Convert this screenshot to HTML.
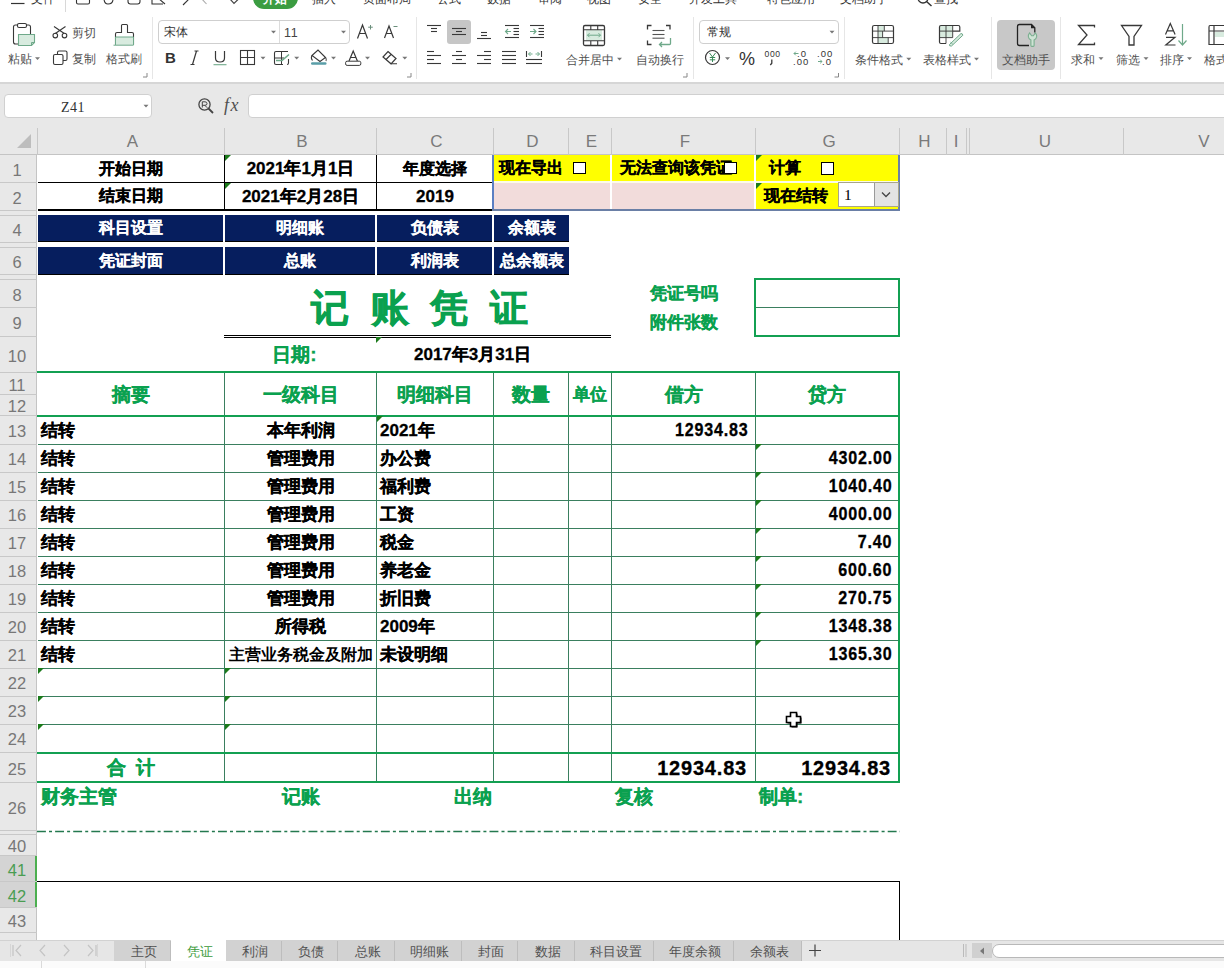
<!DOCTYPE html><html><head><meta charset='utf-8'><style>
*{margin:0;padding:0;box-sizing:border-box}
html,body{width:1224px;height:968px;overflow:hidden;background:#fff}
body{position:relative;font-family:"Liberation Sans",sans-serif;color:#000}
div{position:absolute}
.t{white-space:nowrap;line-height:1}
.rh{color:#7a7a7a;font-size:16.5px;text-align:center;width:34px;left:0}
.ch{color:#7a7a7a;font-size:17px;text-align:center;top:133px}
.n{display:inline-block;letter-spacing:0.9px;transform:scaleX(0.88);transform-origin:100% 50%}
.c{font-weight:bold;font-size:16px;white-space:nowrap;line-height:1;-webkit-text-stroke:0.3px currentColor}
</style></head><body><div style="left:0px;top:127px;width:1224px;height:28px;background:#e8e8e8;border-bottom:1px solid #c4c4c4"></div>
<div style="left:0px;top:155px;width:37px;height:785px;background:#e8e8e8;border-right:1px solid #c4c4c4"></div>
<svg style="position:absolute;left:15px;top:133px" width="18" height="16"><path d="M16 1 L16 15 L2 15 Z" fill="#bdbdbd"/></svg>
<div class="t ch" style="left:39px;width:187px">A</div>
<div class="t ch" style="left:226px;width:152px">B</div>
<div class="t ch" style="left:378px;width:117px">C</div>
<div class="t ch" style="left:495px;width:75px">D</div>
<div class="t ch" style="left:570px;width:43px">E</div>
<div class="t ch" style="left:613px;width:144px">F</div>
<div class="t ch" style="left:757px;width:144px">G</div>
<div class="t ch" style="left:901px;width:47px">H</div>
<div class="t ch" style="left:946px;width:20px">I</div>
<div class="t ch" style="left:968px;width:154px">U</div>
<div class="t ch" style="left:1125px;width:158px">V</div>
<div style="left:37px;top:128px;width:1px;height:27px;background:#c8c8c8"></div>
<div style="left:224px;top:128px;width:1px;height:27px;background:#c8c8c8"></div>
<div style="left:376px;top:128px;width:1px;height:27px;background:#c8c8c8"></div>
<div style="left:493px;top:128px;width:1px;height:27px;background:#c8c8c8"></div>
<div style="left:568px;top:128px;width:1px;height:27px;background:#c8c8c8"></div>
<div style="left:611px;top:128px;width:1px;height:27px;background:#c8c8c8"></div>
<div style="left:755px;top:128px;width:1px;height:27px;background:#c8c8c8"></div>
<div style="left:899px;top:128px;width:1px;height:27px;background:#c8c8c8"></div>
<div style="left:946px;top:128px;width:1px;height:27px;background:#c8c8c8"></div>
<div style="left:966px;top:128px;width:1px;height:27px;background:#c8c8c8"></div>
<div style="left:969px;top:128px;width:1px;height:27px;background:#c8c8c8"></div>
<div style="left:1123px;top:128px;width:1px;height:27px;background:#c8c8c8"></div>
<div style="left:0px;top:856px;width:37px;height:52px;background:#d4d4d4"></div>
<div style="left:35px;top:856px;width:2px;height:52px;background:#4caf50"></div>
<div style="left:0px;top:182px;width:37px;height:1px;background:#c8c8c8"></div>
<div class="t rh" style="top:162px;color:#777">1</div>
<div style="left:0px;top:210px;width:37px;height:1px;background:#c8c8c8"></div>
<div class="t rh" style="top:190px;color:#777">2</div>
<div style="left:0px;top:215px;width:37px;height:1px;background:#c8c8c8"></div>
<div style="left:0px;top:242px;width:37px;height:1px;background:#c8c8c8"></div>
<div class="t rh" style="top:222px;color:#777">4</div>
<div style="left:0px;top:247px;width:37px;height:1px;background:#c8c8c8"></div>
<div style="left:0px;top:274px;width:37px;height:1px;background:#c8c8c8"></div>
<div class="t rh" style="top:254px;color:#777">6</div>
<div style="left:0px;top:279px;width:37px;height:1px;background:#c8c8c8"></div>
<div style="left:0px;top:307px;width:37px;height:1px;background:#c8c8c8"></div>
<div class="t rh" style="top:287px;color:#777">8</div>
<div style="left:0px;top:336px;width:37px;height:1px;background:#c8c8c8"></div>
<div class="t rh" style="top:315px;color:#777">9</div>
<div style="left:0px;top:372px;width:37px;height:1px;background:#c8c8c8"></div>
<div class="t rh" style="top:348px;color:#777">10</div>
<div style="left:0px;top:394px;width:37px;height:1px;background:#c8c8c8"></div>
<div class="t rh" style="top:377px;color:#777">11</div>
<div style="left:0px;top:415px;width:37px;height:1px;background:#c8c8c8"></div>
<div class="t rh" style="top:398px;color:#777">12</div>
<div style="left:0px;top:444px;width:37px;height:1px;background:#c8c8c8"></div>
<div class="t rh" style="top:423px;color:#777">13</div>
<div style="left:0px;top:472px;width:37px;height:1px;background:#c8c8c8"></div>
<div class="t rh" style="top:451px;color:#777">14</div>
<div style="left:0px;top:500px;width:37px;height:1px;background:#c8c8c8"></div>
<div class="t rh" style="top:479px;color:#777">15</div>
<div style="left:0px;top:528px;width:37px;height:1px;background:#c8c8c8"></div>
<div class="t rh" style="top:507px;color:#777">16</div>
<div style="left:0px;top:556px;width:37px;height:1px;background:#c8c8c8"></div>
<div class="t rh" style="top:535px;color:#777">17</div>
<div style="left:0px;top:584px;width:37px;height:1px;background:#c8c8c8"></div>
<div class="t rh" style="top:563px;color:#777">18</div>
<div style="left:0px;top:612px;width:37px;height:1px;background:#c8c8c8"></div>
<div class="t rh" style="top:591px;color:#777">19</div>
<div style="left:0px;top:640px;width:37px;height:1px;background:#c8c8c8"></div>
<div class="t rh" style="top:619px;color:#777">20</div>
<div style="left:0px;top:668px;width:37px;height:1px;background:#c8c8c8"></div>
<div class="t rh" style="top:647px;color:#777">21</div>
<div style="left:0px;top:696px;width:37px;height:1px;background:#c8c8c8"></div>
<div class="t rh" style="top:675px;color:#777">22</div>
<div style="left:0px;top:724px;width:37px;height:1px;background:#c8c8c8"></div>
<div class="t rh" style="top:703px;color:#777">23</div>
<div style="left:0px;top:752px;width:37px;height:1px;background:#c8c8c8"></div>
<div class="t rh" style="top:731px;color:#777">24</div>
<div style="left:0px;top:782px;width:37px;height:1px;background:#c8c8c8"></div>
<div class="t rh" style="top:761px;color:#777">25</div>
<div style="left:0px;top:830px;width:37px;height:1px;background:#c8c8c8"></div>
<div class="t rh" style="top:800px;color:#777">26</div>
<div style="left:0px;top:855px;width:37px;height:1px;background:#c8c8c8"></div>
<div class="t rh" style="top:838px;color:#777">40</div>
<div style="left:0px;top:881px;width:37px;height:1px;background:#c8c8c8"></div>
<div class="t rh" style="top:862px;color:#4a9d52">41</div>
<div style="left:0px;top:907px;width:37px;height:1px;background:#c8c8c8"></div>
<div class="t rh" style="top:888px;color:#4a9d52">42</div>
<div style="left:0px;top:932px;width:37px;height:1px;background:#c8c8c8"></div>
<div class="t rh" style="top:913px;color:#777">43</div>
<div style="left:0px;top:834px;width:37px;height:1px;background:#c8c8c8"></div>
<div class="c" style="left:38px;top:155px;width:186px;height:27px;display:flex;align-items:center;justify-content:center;padding:0 4px;">开始日期</div>
<div class="c" style="left:225px;top:155px;width:151px;height:27px;display:flex;align-items:center;justify-content:center;padding:0 4px;font-size:17px">2021年1月1日</div>
<div class="c" style="left:377px;top:155px;width:116px;height:27px;display:flex;align-items:center;justify-content:center;padding:0 4px;">年度选择</div>
<div class="c" style="left:38px;top:183px;width:186px;height:26px;display:flex;align-items:center;justify-content:center;padding:0 4px;">结束日期</div>
<div class="c" style="left:225px;top:183px;width:151px;height:26px;display:flex;align-items:center;justify-content:center;padding:0 4px;font-size:17px">2021年2月28日</div>
<div class="c" style="left:377px;top:183px;width:116px;height:26px;display:flex;align-items:center;justify-content:center;padding:0 4px;font-size:17px">2019</div>
<div style="left:38px;top:182px;width:455px;height:1px;background:#000"></div>
<div style="left:38px;top:209px;width:455px;height:2px;background:#000"></div>
<div style="left:224px;top:155px;width:1px;height:54px;background:#000"></div>
<div style="left:376px;top:155px;width:1px;height:54px;background:#000"></div>
<svg style="position:absolute;left:225px;top:155px" width="6" height="6"><path d="M0 0 L6 0 L0 6 Z" fill="#1b7a1b"/></svg>
<svg style="position:absolute;left:225px;top:183px" width="6" height="6"><path d="M0 0 L6 0 L0 6 Z" fill="#1b7a1b"/></svg>
<div style="left:492px;top:155px;width:408px;height:56px;background:#fbfbe8"></div>
<div style="left:494px;top:155px;width:116px;height:26px;background:#ffff00"></div>
<div style="left:494px;top:183px;width:116px;height:26px;background:#f2dcdb"></div>
<div style="left:612px;top:155px;width:142px;height:26px;background:#ffff00"></div>
<div style="left:612px;top:183px;width:142px;height:26px;background:#f2dcdb"></div>
<div style="left:756px;top:155px;width:142px;height:26px;background:#ffff00"></div>
<div style="left:756px;top:183px;width:142px;height:26px;background:#ffff00"></div>
<div style="left:610px;top:155px;width:2px;height:56px;background:#fff"></div>
<div style="left:754px;top:155px;width:2px;height:56px;background:#fff"></div>
<div style="left:492px;top:155px;width:2px;height:56px;background:#5b7fc3"></div>
<div style="left:492px;top:209px;width:408px;height:2px;background:#6a7fa6"></div>
<div style="left:898px;top:155px;width:2px;height:56px;background:#6a80a8"></div>
<div class="c" style="left:494px;top:155px;width:116px;height:26px;display:flex;align-items:center;justify-content:flex-start;padding:0 5px;">现在导出</div>
<div style="left:573px;top:162px;width:13px;height:12px;background:#fff;border:1px solid #000"></div>
<div class="c" style="left:612px;top:155px;width:142px;height:26px;display:flex;align-items:center;justify-content:flex-start;padding:0 8px;overflow:hidden">无法查询该凭证</div>
<div style="left:724px;top:162px;width:13px;height:12px;background:#fff;border:1px solid #000"></div>
<div class="c" style="left:756px;top:155px;width:142px;height:26px;display:flex;align-items:center;justify-content:flex-start;padding:0 13px;">计算</div>
<div style="left:821px;top:162px;width:13px;height:13px;background:#fff;border:1px solid #000"></div>
<div class="c" style="left:756px;top:183px;width:142px;height:26px;display:flex;align-items:center;justify-content:flex-start;padding:0 8px;">现在结转</div>
<div style="left:838px;top:182px;width:61px;height:25px;background:#fff;border:1px solid #a9a58a"></div>
<div style="left:874px;top:183px;width:24px;height:23px;background:#e3e3e3;border-left:1px solid #9a9a9a"></div>
<div class="t" style="left:844px;top:187px;font-size:15.5px;font-family:'Liberation Serif',serif">1</div>
<svg style="position:absolute;left:880px;top:191px" width="12" height="8"><path d="M2 1.5 L6 5.5 L10 1.5" stroke="#444" stroke-width="1.3" fill="none"/></svg>
<svg style="position:absolute;left:756px;top:155px" width="6" height="6"><path d="M0 0 L6 0 L0 6 Z" fill="#1b7a1b"/></svg>
<svg style="position:absolute;left:756px;top:183px" width="6" height="6"><path d="M0 0 L6 0 L0 6 Z" fill="#1b7a1b"/></svg>
<div style="left:38px;top:215px;width:185px;height:27px;background:#061e5e;border-bottom:1px solid #000"></div>
<div class="c" style="left:38px;top:215px;width:185px;height:26px;display:flex;align-items:center;justify-content:center;padding:0 4px;color:#fff;-webkit-text-stroke:0.15px #fff">科目设置</div>
<div style="left:225px;top:215px;width:150px;height:27px;background:#061e5e;border-bottom:1px solid #000"></div>
<div class="c" style="left:225px;top:215px;width:150px;height:26px;display:flex;align-items:center;justify-content:center;padding:0 4px;color:#fff;-webkit-text-stroke:0.15px #fff">明细账</div>
<div style="left:377px;top:215px;width:115px;height:27px;background:#061e5e;border-bottom:1px solid #000"></div>
<div class="c" style="left:377px;top:215px;width:115px;height:26px;display:flex;align-items:center;justify-content:center;padding:0 4px;color:#fff;-webkit-text-stroke:0.15px #fff">负债表</div>
<div style="left:494px;top:215px;width:75px;height:27px;background:#061e5e;border-bottom:1px solid #000"></div>
<div class="c" style="left:494px;top:215px;width:75px;height:26px;display:flex;align-items:center;justify-content:center;padding:0 4px;color:#fff;-webkit-text-stroke:0.15px #fff">余额表</div>
<div style="left:38px;top:247px;width:185px;height:28px;background:#061e5e;border-bottom:1px solid #000"></div>
<div class="c" style="left:38px;top:247px;width:185px;height:27px;display:flex;align-items:center;justify-content:center;padding:0 4px;color:#fff;-webkit-text-stroke:0.15px #fff">凭证封面</div>
<div style="left:225px;top:247px;width:150px;height:28px;background:#061e5e;border-bottom:1px solid #000"></div>
<div class="c" style="left:225px;top:247px;width:150px;height:27px;display:flex;align-items:center;justify-content:center;padding:0 4px;color:#fff;-webkit-text-stroke:0.15px #fff">总账</div>
<div style="left:377px;top:247px;width:115px;height:28px;background:#061e5e;border-bottom:1px solid #000"></div>
<div class="c" style="left:377px;top:247px;width:115px;height:27px;display:flex;align-items:center;justify-content:center;padding:0 4px;color:#fff;-webkit-text-stroke:0.15px #fff">利润表</div>
<div style="left:494px;top:247px;width:75px;height:28px;background:#061e5e;border-bottom:1px solid #000"></div>
<div class="c" style="left:494px;top:247px;width:75px;height:27px;display:flex;align-items:center;justify-content:center;padding:0 4px;color:#fff;-webkit-text-stroke:0.15px #fff">总余额表</div>
<div class="c" style="left:226px;top:280px;width:387px;height:56px;display:flex;align-items:center;justify-content:center;padding:0 4px;color:#0aa14f;font-size:38px;word-spacing:11px;-webkit-text-stroke:0.7px #0aa14f">记 账 凭 证</div>
<div style="left:224px;top:335px;width:387px;height:1px;background:#000"></div>
<div style="left:224px;top:337px;width:387px;height:1px;background:#000"></div>
<svg style="position:absolute;left:376px;top:337px" width="6" height="6"><path d="M0 0 L6 0 L0 6 Z" fill="#1b7a1b"/></svg>
<div class="c" style="left:225px;top:338px;width:139px;height:33px;display:flex;align-items:center;justify-content:center;padding:0 4px;color:#0aa14f;font-size:19px">日期:</div>
<div class="c" style="left:377px;top:338px;width:234px;height:33px;display:flex;align-items:center;justify-content:flex-start;padding:0 37px;font-size:17px">2017年3月31日</div>
<div class="c" style="left:612px;top:280px;width:143px;height:27px;display:flex;align-items:center;justify-content:center;padding:0 4px;color:#0aa14f;font-size:17px">凭证号吗</div>
<div class="c" style="left:612px;top:308px;width:143px;height:28px;display:flex;align-items:center;justify-content:center;padding:0 4px;color:#0aa14f;font-size:17px">附件张数</div>
<div style="left:754px;top:278px;width:146px;height:59px;border:2px solid #13a052"></div>
<div style="left:756px;top:307px;width:142px;height:1px;background:#3a7f5f"></div>
<div style="left:224px;top:373px;width:1px;height:408px;background:#3a7f5f"></div>
<div style="left:376px;top:373px;width:1px;height:408px;background:#3a7f5f"></div>
<div style="left:493px;top:373px;width:1px;height:408px;background:#3a7f5f"></div>
<div style="left:568px;top:373px;width:1px;height:408px;background:#3a7f5f"></div>
<div style="left:611px;top:373px;width:1px;height:408px;background:#3a7f5f"></div>
<div style="left:755px;top:373px;width:1px;height:408px;background:#3a7f5f"></div>
<div style="left:38px;top:444px;width:860px;height:1px;background:#3a7f5f"></div>
<div style="left:38px;top:472px;width:860px;height:1px;background:#3a7f5f"></div>
<div style="left:38px;top:500px;width:860px;height:1px;background:#3a7f5f"></div>
<div style="left:38px;top:528px;width:860px;height:1px;background:#3a7f5f"></div>
<div style="left:38px;top:556px;width:860px;height:1px;background:#3a7f5f"></div>
<div style="left:38px;top:584px;width:860px;height:1px;background:#3a7f5f"></div>
<div style="left:38px;top:612px;width:860px;height:1px;background:#3a7f5f"></div>
<div style="left:38px;top:640px;width:860px;height:1px;background:#3a7f5f"></div>
<div style="left:38px;top:668px;width:860px;height:1px;background:#3a7f5f"></div>
<div style="left:38px;top:696px;width:860px;height:1px;background:#3a7f5f"></div>
<div style="left:38px;top:724px;width:860px;height:1px;background:#3a7f5f"></div>
<div style="left:37px;top:371px;width:863px;height:2px;background:#13a052"></div>
<div style="left:37px;top:415px;width:863px;height:2px;background:#13a052"></div>
<div style="left:37px;top:752px;width:863px;height:2px;background:#13a052"></div>
<div style="left:37px;top:781px;width:863px;height:2px;background:#13a052"></div>
<div style="left:898px;top:371px;width:2px;height:412px;background:#13a052"></div>
<div class="c" style="left:38px;top:373px;width:186px;height:42px;display:flex;align-items:center;justify-content:center;padding:0 2px;color:#0aa14f;font-size:19px">摘要</div>
<div class="c" style="left:225px;top:373px;width:151px;height:42px;display:flex;align-items:center;justify-content:center;padding:0 2px;color:#0aa14f;font-size:19px">一级科目</div>
<div class="c" style="left:377px;top:373px;width:116px;height:42px;display:flex;align-items:center;justify-content:center;padding:0 2px;color:#0aa14f;font-size:19px">明细科目</div>
<div class="c" style="left:494px;top:373px;width:74px;height:42px;display:flex;align-items:center;justify-content:center;padding:0 2px;color:#0aa14f;font-size:19px">数量</div>
<div class="c" style="left:569px;top:373px;width:42px;height:42px;display:flex;align-items:center;justify-content:center;padding:0 2px;color:#0aa14f;font-size:17px">单位</div>
<div class="c" style="left:612px;top:373px;width:143px;height:42px;display:flex;align-items:center;justify-content:center;padding:0 2px;color:#0aa14f;font-size:19px">借方</div>
<div class="c" style="left:756px;top:373px;width:142px;height:42px;display:flex;align-items:center;justify-content:center;padding:0 2px;color:#0aa14f;font-size:19px">贷方</div>
<div class="c" style="left:38px;top:417px;width:186px;height:27px;display:flex;align-items:center;justify-content:flex-start;padding:0 3px;font-size:17px">结转</div>
<div class="c" style="left:225px;top:417px;width:151px;height:27px;display:flex;align-items:center;justify-content:center;padding:0 1px;font-size:17px">本年利润</div>
<div class="c" style="left:377px;top:417px;width:116px;height:27px;display:flex;align-items:center;justify-content:flex-start;padding:0 3px;font-size:17px">2021年</div>
<div class="c" style="left:612px;top:417px;width:143px;height:27px;display:flex;align-items:center;justify-content:flex-end;padding:0 7px;font-size:18.3px"><span class="n">12934.83</span></div>
<div class="c" style="left:38px;top:445px;width:186px;height:27px;display:flex;align-items:center;justify-content:flex-start;padding:0 3px;font-size:17px">结转</div>
<div class="c" style="left:225px;top:445px;width:151px;height:27px;display:flex;align-items:center;justify-content:center;padding:0 1px;font-size:17px">管理费用</div>
<div class="c" style="left:377px;top:445px;width:116px;height:27px;display:flex;align-items:center;justify-content:flex-start;padding:0 3px;font-size:17px">办公费</div>
<div class="c" style="left:756px;top:445px;width:142px;height:27px;display:flex;align-items:center;justify-content:flex-end;padding:0 6px;font-size:18.3px"><span class="n">4302.00</span></div>
<div class="c" style="left:38px;top:473px;width:186px;height:27px;display:flex;align-items:center;justify-content:flex-start;padding:0 3px;font-size:17px">结转</div>
<div class="c" style="left:225px;top:473px;width:151px;height:27px;display:flex;align-items:center;justify-content:center;padding:0 1px;font-size:17px">管理费用</div>
<div class="c" style="left:377px;top:473px;width:116px;height:27px;display:flex;align-items:center;justify-content:flex-start;padding:0 3px;font-size:17px">福利费</div>
<div class="c" style="left:756px;top:473px;width:142px;height:27px;display:flex;align-items:center;justify-content:flex-end;padding:0 6px;font-size:18.3px"><span class="n">1040.40</span></div>
<div class="c" style="left:38px;top:501px;width:186px;height:27px;display:flex;align-items:center;justify-content:flex-start;padding:0 3px;font-size:17px">结转</div>
<div class="c" style="left:225px;top:501px;width:151px;height:27px;display:flex;align-items:center;justify-content:center;padding:0 1px;font-size:17px">管理费用</div>
<div class="c" style="left:377px;top:501px;width:116px;height:27px;display:flex;align-items:center;justify-content:flex-start;padding:0 3px;font-size:17px">工资</div>
<div class="c" style="left:756px;top:501px;width:142px;height:27px;display:flex;align-items:center;justify-content:flex-end;padding:0 6px;font-size:18.3px"><span class="n">4000.00</span></div>
<div class="c" style="left:38px;top:529px;width:186px;height:27px;display:flex;align-items:center;justify-content:flex-start;padding:0 3px;font-size:17px">结转</div>
<div class="c" style="left:225px;top:529px;width:151px;height:27px;display:flex;align-items:center;justify-content:center;padding:0 1px;font-size:17px">管理费用</div>
<div class="c" style="left:377px;top:529px;width:116px;height:27px;display:flex;align-items:center;justify-content:flex-start;padding:0 3px;font-size:17px">税金</div>
<div class="c" style="left:756px;top:529px;width:142px;height:27px;display:flex;align-items:center;justify-content:flex-end;padding:0 6px;font-size:18.3px"><span class="n">7.40</span></div>
<div class="c" style="left:38px;top:557px;width:186px;height:27px;display:flex;align-items:center;justify-content:flex-start;padding:0 3px;font-size:17px">结转</div>
<div class="c" style="left:225px;top:557px;width:151px;height:27px;display:flex;align-items:center;justify-content:center;padding:0 1px;font-size:17px">管理费用</div>
<div class="c" style="left:377px;top:557px;width:116px;height:27px;display:flex;align-items:center;justify-content:flex-start;padding:0 3px;font-size:17px">养老金</div>
<div class="c" style="left:756px;top:557px;width:142px;height:27px;display:flex;align-items:center;justify-content:flex-end;padding:0 6px;font-size:18.3px"><span class="n">600.60</span></div>
<div class="c" style="left:38px;top:585px;width:186px;height:27px;display:flex;align-items:center;justify-content:flex-start;padding:0 3px;font-size:17px">结转</div>
<div class="c" style="left:225px;top:585px;width:151px;height:27px;display:flex;align-items:center;justify-content:center;padding:0 1px;font-size:17px">管理费用</div>
<div class="c" style="left:377px;top:585px;width:116px;height:27px;display:flex;align-items:center;justify-content:flex-start;padding:0 3px;font-size:17px">折旧费</div>
<div class="c" style="left:756px;top:585px;width:142px;height:27px;display:flex;align-items:center;justify-content:flex-end;padding:0 6px;font-size:18.3px"><span class="n">270.75</span></div>
<div class="c" style="left:38px;top:613px;width:186px;height:27px;display:flex;align-items:center;justify-content:flex-start;padding:0 3px;font-size:17px">结转</div>
<div class="c" style="left:225px;top:613px;width:151px;height:27px;display:flex;align-items:center;justify-content:center;padding:0 1px;font-size:17px">所得税</div>
<div class="c" style="left:377px;top:613px;width:116px;height:27px;display:flex;align-items:center;justify-content:flex-start;padding:0 3px;font-size:17px">2009年</div>
<div class="c" style="left:756px;top:613px;width:142px;height:27px;display:flex;align-items:center;justify-content:flex-end;padding:0 6px;font-size:18.3px"><span class="n">1348.38</span></div>
<div class="c" style="left:38px;top:641px;width:186px;height:27px;display:flex;align-items:center;justify-content:flex-start;padding:0 3px;font-size:17px">结转</div>
<div class="c" style="left:225px;top:641px;width:151px;height:27px;display:flex;align-items:center;justify-content:center;padding:0 1px;font-size:16px;-webkit-text-stroke:0">主营业务税金及附加</div>
<div class="c" style="left:377px;top:641px;width:116px;height:27px;display:flex;align-items:center;justify-content:flex-start;padding:0 3px;font-size:17px">未设明细</div>
<div class="c" style="left:756px;top:641px;width:142px;height:27px;display:flex;align-items:center;justify-content:flex-end;padding:0 6px;font-size:18.3px"><span class="n">1365.30</span></div>
<svg style="position:absolute;left:377px;top:416px" width="6" height="6"><path d="M0 0 L6 0 L0 6 Z" fill="#1b7a1b"/></svg>
<svg style="position:absolute;left:756px;top:444px" width="6" height="6"><path d="M0 0 L6 0 L0 6 Z" fill="#1b7a1b"/></svg>
<svg style="position:absolute;left:756px;top:472px" width="6" height="6"><path d="M0 0 L6 0 L0 6 Z" fill="#1b7a1b"/></svg>
<svg style="position:absolute;left:756px;top:500px" width="6" height="6"><path d="M0 0 L6 0 L0 6 Z" fill="#1b7a1b"/></svg>
<svg style="position:absolute;left:756px;top:528px" width="6" height="6"><path d="M0 0 L6 0 L0 6 Z" fill="#1b7a1b"/></svg>
<svg style="position:absolute;left:756px;top:556px" width="6" height="6"><path d="M0 0 L6 0 L0 6 Z" fill="#1b7a1b"/></svg>
<svg style="position:absolute;left:756px;top:584px" width="6" height="6"><path d="M0 0 L6 0 L0 6 Z" fill="#1b7a1b"/></svg>
<svg style="position:absolute;left:756px;top:612px" width="6" height="6"><path d="M0 0 L6 0 L0 6 Z" fill="#1b7a1b"/></svg>
<svg style="position:absolute;left:756px;top:640px" width="6" height="6"><path d="M0 0 L6 0 L0 6 Z" fill="#1b7a1b"/></svg>
<svg style="position:absolute;left:38px;top:668px" width="6" height="6"><path d="M0 0 L6 0 L0 6 Z" fill="#1b7a1b"/></svg>
<svg style="position:absolute;left:225px;top:668px" width="6" height="6"><path d="M0 0 L6 0 L0 6 Z" fill="#1b7a1b"/></svg>
<svg style="position:absolute;left:38px;top:696px" width="6" height="6"><path d="M0 0 L6 0 L0 6 Z" fill="#1b7a1b"/></svg>
<svg style="position:absolute;left:225px;top:696px" width="6" height="6"><path d="M0 0 L6 0 L0 6 Z" fill="#1b7a1b"/></svg>
<svg style="position:absolute;left:38px;top:724px" width="6" height="6"><path d="M0 0 L6 0 L0 6 Z" fill="#1b7a1b"/></svg>
<svg style="position:absolute;left:225px;top:724px" width="6" height="6"><path d="M0 0 L6 0 L0 6 Z" fill="#1b7a1b"/></svg>
<div class="c" style="left:38px;top:754px;width:186px;height:27px;display:flex;align-items:center;justify-content:center;padding:0 4px;color:#0aa14f;font-size:19px">合&nbsp;&nbsp;计</div>
<div class="c" style="left:612px;top:754px;width:143px;height:27px;display:flex;align-items:center;justify-content:flex-end;padding:0 8px;font-size:20px;letter-spacing:0.8px">12934.83</div>
<div class="c" style="left:756px;top:754px;width:142px;height:27px;display:flex;align-items:center;justify-content:flex-end;padding:0 7px;font-size:20px;letter-spacing:0.8px">12934.83</div>
<div class="t" style="left:41px;top:787px;color:#0aa14f;font-weight:bold;font-size:19px;-webkit-text-stroke:0.3px #0aa14f">财务主管</div>
<div class="t" style="left:282px;top:787px;color:#0aa14f;font-weight:bold;font-size:19px;-webkit-text-stroke:0.3px #0aa14f">记账</div>
<div class="t" style="left:454px;top:787px;color:#0aa14f;font-weight:bold;font-size:19px;-webkit-text-stroke:0.3px #0aa14f">出纳</div>
<div class="t" style="left:615px;top:787px;color:#0aa14f;font-weight:bold;font-size:19px;-webkit-text-stroke:0.3px #0aa14f">复核</div>
<div class="t" style="left:759px;top:787px;color:#0aa14f;font-weight:bold;font-size:19px;-webkit-text-stroke:0.3px #0aa14f">制单:</div>
<svg style="position:absolute;left:37px;top:830px" width="863" height="3"><line x1="0" y1="1.5" x2="863" y2="1.5" stroke="#24794f" stroke-width="1.3" stroke-dasharray="8.9 3.1 3 3.1"/></svg>
<div style="left:37px;top:881px;width:863px;height:70px;border-top:1px solid #000;border-right:1px solid #000"></div>
<svg style="position:absolute;left:784px;top:710px" width="20" height="20"><path d="M7.5 3.5 H13.5 V7.5 H17.5 V13.5 H13.5 V17.5 H7.5 V13.5 H3.5 V7.5 H7.5 Z" fill="#000"/><path d="M6.5 2.5 H12.5 V6.5 H16.5 V12.5 H12.5 V16.5 H6.5 V12.5 H2.5 V6.5 H6.5 Z" fill="#fff" stroke="#000" stroke-width="1.6"/></svg>
<div style="left:0px;top:82px;width:1224px;height:2px;background:#d6d6d6"></div>
<div style="left:0px;top:84px;width:1224px;height:44px;background:#e8e8e8"></div>
<div style="left:4px;top:94px;width:148px;height:24px;background:#fff;border:1px solid #d0d0d0;border-radius:4px"></div>
<div class="t" style="left:61px;top:101px;font-family:'Liberation Serif',serif;font-size:14px;color:#333;letter-spacing:0.5px">Z41</div>
<div style="left:248px;top:94px;width:990px;height:24px;background:#fff;border:1px solid #d0d0d0;border-radius:4px"></div>
<svg style="position:absolute;left:0;top:84px" width="260" height="44" viewBox="0 84 260 44"><path d="M143.5 104.8 L148.5 104.8 L146 107.5 Z" fill="#777"/><circle cx="204.5" cy="104.5" r="5.6" stroke="#444" stroke-width="1.3" fill="none"/><path d="M208.5 108.5 L213 113" stroke="#444" stroke-width="1.8"/><path d="M202.3 107.5 V101.8 H205 Q207 101.8 207 103.6 Q207 105.3 205 105.3 H202.3 M204.8 105.3 L207.3 107.8" stroke="#444" stroke-width="1" fill="none"/></svg>
<div class="t" style="left:224px;top:96px;font-family:'Liberation Serif',serif;font-style:italic;font-size:18px;color:#505050;letter-spacing:1.5px">fx</div>
<div class="t" style="left:31px;top:-7px;font-size:12px;color:#333">文件</div>
<div class="t" style="left:312px;top:-7px;font-size:12px;color:#333">插入</div>
<div class="t" style="left:363px;top:-7px;font-size:12px;color:#333">页面布局</div>
<div class="t" style="left:437px;top:-7px;font-size:12px;color:#333">公式</div>
<div class="t" style="left:487px;top:-7px;font-size:12px;color:#333">数据</div>
<div class="t" style="left:538px;top:-7px;font-size:12px;color:#333">审阅</div>
<div class="t" style="left:587px;top:-7px;font-size:12px;color:#333">视图</div>
<div class="t" style="left:638px;top:-7px;font-size:12px;color:#333">安全</div>
<div class="t" style="left:689px;top:-7px;font-size:12px;color:#333">开发工具</div>
<div class="t" style="left:767px;top:-7px;font-size:12px;color:#333">特色应用</div>
<div class="t" style="left:840px;top:-7px;font-size:12px;color:#333">文档助手</div>
<div class="t" style="left:934px;top:-7px;font-size:12px;color:#333">查找</div>
<div style="left:253px;top:-14px;width:45px;height:23px;background:#3b9c41;border-radius:11px"></div>
<div class="t" style="left:263px;top:-7px;font-size:12px;color:#fff;font-weight:bold">开始</div>
<div class="t" style="left:8px;top:53px;font-size:12px;color:#505050">粘贴</div>
<div class="t" style="left:72px;top:27px;font-size:12px;color:#505050">剪切</div>
<div class="t" style="left:72px;top:53px;font-size:12px;color:#505050">复制</div>
<div class="t" style="left:106px;top:53px;font-size:12px;color:#505050">格式刷</div>
<div class="t" style="left:566px;top:54px;font-size:12px;color:#505050">合并居中</div>
<div class="t" style="left:636px;top:54px;font-size:12px;color:#505050">自动换行</div>
<div class="t" style="left:855px;top:54px;font-size:12px;color:#505050">条件格式</div>
<div class="t" style="left:923px;top:54px;font-size:12px;color:#505050">表格样式</div>
<div class="t" style="left:1071px;top:54px;font-size:12px;color:#505050">求和</div>
<div class="t" style="left:1116px;top:54px;font-size:12px;color:#505050">筛选</div>
<div class="t" style="left:1160px;top:54px;font-size:12px;color:#505050">排序</div>
<div class="t" style="left:1204px;top:54px;font-size:12px;color:#505050">格式</div>
<div style="left:997px;top:20px;width:58px;height:50px;background:#c8c8c8;border-radius:4px"></div>
<div class="t" style="left:1002px;top:54px;font-size:12px;color:#505050">文档助手</div>
<div style="left:158px;top:20px;width:192px;height:24px;background:#fff;border:1px solid #cfcfcf;border-radius:4px"></div>
<div style="left:279px;top:21px;width:1px;height:22px;background:#dcdcdc"></div>
<div class="t" style="left:164px;top:26px;font-size:12px;color:#333">宋体</div>
<div class="t" style="left:284px;top:27px;font-size:12.5px;color:#444;letter-spacing:0.8px">11</div>
<div style="left:699px;top:20px;width:140px;height:24px;background:#fff;border:1px solid #cfcfcf;border-radius:4px"></div>
<div class="t" style="left:707px;top:26px;font-size:12px;color:#333">常规</div>
<div style="left:447px;top:20px;width:24px;height:24px;background:#c6c6c6;border-radius:3px"></div>
<div class="t" style="left:165px;top:50px;font-size:15px;font-weight:bold;color:#333">B</div>
<div class="t" style="left:739px;top:50px;font-size:18px;color:#333">%</div>
<svg style="position:absolute;left:0;top:0" width="1224" height="90" viewBox="0 0 1224 90"><line x1="152.5" y1="17" x2="152.5" y2="79" stroke="#e6e6e6" stroke-width="1"/><line x1="416.5" y1="17" x2="416.5" y2="79" stroke="#e6e6e6" stroke-width="1"/><line x1="693.5" y1="17" x2="693.5" y2="79" stroke="#e6e6e6" stroke-width="1"/><line x1="844.5" y1="17" x2="844.5" y2="79" stroke="#e6e6e6" stroke-width="1"/><line x1="991.5" y1="17" x2="991.5" y2="79" stroke="#e6e6e6" stroke-width="1"/><line x1="1060.5" y1="17" x2="1060.5" y2="79" stroke="#e6e6e6" stroke-width="1"/><line x1="65.5" y1="0" x2="65.5" y2="12" stroke="#d8d8d8" stroke-width="1"/><path d="M143 77 H147 V73" stroke="#888" stroke-width="1" fill="none" /><path d="M407 77 H411 V73" stroke="#888" stroke-width="1" fill="none" /><path d="M683 77 H687 V73" stroke="#888" stroke-width="1" fill="none" /><path d="M834.5 77 H838.5 V73" stroke="#888" stroke-width="1" fill="none" /><path d="M11 3.5 H24.5" stroke="#333" stroke-width="1.2" fill="none" /><rect x="76.5" y="-6" width="13" height="10" rx="1.5" stroke="#333" stroke-width="1.1" fill="none"/><path d="M104 -2 Q104 4 108 4 Q113 4 113 -1" stroke="#333" stroke-width="1.1" fill="none" /><rect x="128" y="-6" width="12" height="10" rx="2.5" stroke="#333" stroke-width="1.1" fill="none"/><path d="M152 -6 V4 H163 M158 -2 L165 4" stroke="#333" stroke-width="1.1" fill="none" /><path d="M183 5 L190 -2" stroke="#333" stroke-width="1.1" fill="none" /><path d="M200 -3 L206.5 4" stroke="#aaa" stroke-width="1.1" fill="none" /><path d="M230 -1 L234 3.5 L238.5 -1" stroke="#444" stroke-width="1.2" fill="none" /><circle cx="923" cy="-2" r="5" stroke="#333" stroke-width="1.3" fill="none"/><path d="M926.5 1.5 L931.5 6" stroke="#333" stroke-width="1.5" fill="none" /><rect x="13.5" y="25" width="17" height="19" rx="2" stroke="#383838" stroke-width="1.1" fill="none"/><rect x="17.5" y="23.5" width="9" height="4" rx="1.5" stroke="#383838" stroke-width="1.1" fill="#fff"/><path d="M18.5 34.5 H34.5 V42.5 L31.5 45.5 H18.5 Z" stroke="#6fa98a" stroke-width="1.1" fill="#d8ebdf" /><path d="M31.5 45.5 V42.5 H34.5" stroke="#6fa98a" stroke-width="1" fill="none" /><path d="M35.0 57.3 L40.0 57.3 L37.5 60.0 Z" fill="#777"/><path d="M54 26.5 L64.3 33.5 M65.5 26.5 L55.3 33.5" stroke="#383838" stroke-width="1.1" fill="none" /><circle cx="55.3" cy="35.6" r="2.3" stroke="#383838" stroke-width="1.1" fill="none"/><circle cx="64.5" cy="35.6" r="2.3" stroke="#383838" stroke-width="1.1" fill="none"/><path d="M57.5 54 V52.5 Q57.5 51 59 51 H65.5 Q67 51 67 52.5 V59 Q67 60.5 65.5 60.5 H63" stroke="#383838" stroke-width="1.1" fill="none" /><rect x="53.5" y="54.5" width="9.5" height="10" rx="1.5" stroke="#383838" stroke-width="1.1" fill="#fff"/><path d="M115.5 44.5 V34 Q115.5 32.5 117 32.5 H121.5 V25.5 Q121.5 24.5 122.5 24.5 H126.5 Q127.5 24.5 127.5 25.5 V32.5 H132 Q133.5 32.5 133.5 34 V44.5" stroke="#383838" stroke-width="1.1" fill="none" /><rect x="115.8" y="37" width="17.4" height="8" rx="0" stroke="none" stroke-width="1.1" fill="#d8ebdf"/><path d="M115.5 37 H133.5" stroke="#6fa98a" stroke-width="1" fill="none" /><path d="M113.5 45.2 H133.5 M115.5 37 V45 M133.5 37 V45" stroke="#6fa98a" stroke-width="1" fill="none" /><path d="M271.0 30.8 L276.0 30.8 L273.5 33.5 Z" fill="#777"/><path d="M341.0 30.8 L346.0 30.8 L343.5 33.5 Z" fill="#777"/><path d="M357.5 38.5 L362.5 25 L367.5 38.5 M359.3 33.5 H365.7" stroke="#383838" stroke-width="1.2" fill="none" /><path d="M370.5 25 V29.5 M368.2 27.2 H372.8" stroke="#6b8f7b" stroke-width="1" fill="none" /><path d="M384.5 38 L389 26 L393.5 38 M386.2 33.5 H391.8" stroke="#383838" stroke-width="1.2" fill="none" /><path d="M393.5 26.5 H397.5" stroke="#6b8f7b" stroke-width="1" fill="none" /><path d="M194.5 51 H198.5 M190.5 64.5 H194.5 M196.5 51 L192.5 64.5" stroke="#383838" stroke-width="1.2" fill="none" /><path d="M215.5 51 V58 Q215.5 62 220 62 Q224.5 62 224.5 58 V51" stroke="#383838" stroke-width="1.2" fill="none" /><path d="M213.5 64.7 H226.5" stroke="#6fa98a" stroke-width="1.1" fill="none" /><rect x="240.5" y="50.5" width="14" height="14" rx="0" stroke="#383838" stroke-width="1.1" fill="none"/><path d="M247.5 50.5 V64.5 M240.5 57.5 H254.5" stroke="#383838" stroke-width="1.1" fill="none" /><path d="M260.5 56.8 L265.5 56.8 L263 59.5 Z" fill="#777"/><path d="M283 64.5 H276 Q274.5 64.5 274.5 63 V53 Q274.5 51.5 276 51.5 H288 M288.5 59 V63 Q288.5 64.5 287 64.5" stroke="#383838" stroke-width="1.1" fill="none" /><path d="M274.5 58 H284 M281.5 51.5 V64.5" stroke="#383838" stroke-width="1" fill="none" /><path d="M276 60.5 L282 60.5 L289 54.5" stroke="#6fa98a" stroke-width="1.6" fill="none" /><path d="M294.2 56.8 L299.2 56.8 L296.7 59.5 Z" fill="#777"/><path d="M312 55.5 L318 50 L325.5 57.5 L320 61.5 Z" stroke="#383838" stroke-width="1.1" fill="none" /><path d="M312 55.5 Q310.5 58 312.5 60.5" stroke="#383838" stroke-width="1.1" fill="none" /><path d="M325.5 57.5 Q327 59.5 326 61" stroke="#383838" stroke-width="1.1" fill="none" /><rect x="311" y="62.2" width="15.5" height="2.6" rx="1.2" stroke="none" stroke-width="1.1" fill="#5a9ea8"/><path d="M331.0 56.8 L336.0 56.8 L333.5 59.5 Z" fill="#777"/><path d="M349 61 L353.2 51 L357.4 61 M350.4 57.5 H356" stroke="#383838" stroke-width="1.2" fill="none" /><rect x="345.6" y="61.2" width="15.2" height="4.2" rx="1.5" stroke="#383838" stroke-width="1" fill="#fff"/><path d="M365.0 56.8 L370.0 56.8 L367.5 59.5 Z" fill="#777"/><path d="M388 51.5 L396 58.5 L391 63.8 L383 57 Z" stroke="#383838" stroke-width="1.2" fill="none" /><path d="M386 59.5 L391 54.5 M391 63.8 H397" stroke="#383838" stroke-width="1.1" fill="none" /><path d="M402.3 56.8 L407.3 56.8 L404.8 59.5 Z" fill="#777"/><line x1="427" y1="25.5" x2="441" y2="25.5" stroke="#383838" stroke-width="1.1"/><line x1="431" y1="28.5" x2="437" y2="28.5" stroke="#383838" stroke-width="1.1"/><line x1="431" y1="31.5" x2="437" y2="31.5" stroke="#383838" stroke-width="1.1"/><line x1="452" y1="28.5" x2="466" y2="28.5" stroke="#383838" stroke-width="1.1"/><line x1="456" y1="31.5" x2="462" y2="31.5" stroke="#383838" stroke-width="1.1"/><line x1="452" y1="34.5" x2="466" y2="34.5" stroke="#383838" stroke-width="1.1"/><line x1="481" y1="32.5" x2="487" y2="32.5" stroke="#383838" stroke-width="1.1"/><line x1="481" y1="35.5" x2="487" y2="35.5" stroke="#383838" stroke-width="1.1"/><line x1="477" y1="38.5" x2="491" y2="38.5" stroke="#383838" stroke-width="1.1"/><line x1="505" y1="25.5" x2="519" y2="25.5" stroke="#383838" stroke-width="1.1"/><line x1="513.5" y1="28.5" x2="519" y2="28.5" stroke="#383838" stroke-width="1.1"/><line x1="513.5" y1="31.5" x2="519" y2="31.5" stroke="#383838" stroke-width="1.1"/><line x1="513.5" y1="34.5" x2="519" y2="34.5" stroke="#383838" stroke-width="1.1"/><line x1="505" y1="37.5" x2="519" y2="37.5" stroke="#383838" stroke-width="1.1"/><path d="M511 31.5 H505.5 M508 29 L505.5 31.5 L508 34" stroke="#6fa98a" stroke-width="1.1" fill="none" /><line x1="530" y1="25.5" x2="544" y2="25.5" stroke="#383838" stroke-width="1.1"/><line x1="538.5" y1="28.5" x2="544" y2="28.5" stroke="#383838" stroke-width="1.1"/><line x1="538.5" y1="31.5" x2="544" y2="31.5" stroke="#383838" stroke-width="1.1"/><line x1="538.5" y1="34.5" x2="544" y2="34.5" stroke="#383838" stroke-width="1.1"/><line x1="530" y1="37.5" x2="544" y2="37.5" stroke="#383838" stroke-width="1.1"/><path d="M530 31.5 H536 M533.5 29 L536 31.5 L533.5 34" stroke="#6fa98a" stroke-width="1.1" fill="none" /><line x1="427" y1="51.5" x2="434" y2="51.5" stroke="#383838" stroke-width="1.1"/><line x1="427" y1="55.5" x2="441" y2="55.5" stroke="#383838" stroke-width="1.1"/><line x1="427" y1="59.5" x2="434" y2="59.5" stroke="#383838" stroke-width="1.1"/><line x1="427" y1="63.5" x2="441" y2="63.5" stroke="#383838" stroke-width="1.1"/><line x1="456" y1="51.5" x2="462" y2="51.5" stroke="#383838" stroke-width="1.1"/><line x1="452" y1="55.5" x2="466" y2="55.5" stroke="#383838" stroke-width="1.1"/><line x1="456" y1="59.5" x2="462" y2="59.5" stroke="#383838" stroke-width="1.1"/><line x1="452" y1="63.5" x2="466" y2="63.5" stroke="#383838" stroke-width="1.1"/><line x1="484" y1="51.5" x2="491" y2="51.5" stroke="#383838" stroke-width="1.1"/><line x1="477" y1="55.5" x2="491" y2="55.5" stroke="#383838" stroke-width="1.1"/><line x1="484" y1="59.5" x2="491" y2="59.5" stroke="#383838" stroke-width="1.1"/><line x1="477" y1="63.5" x2="491" y2="63.5" stroke="#383838" stroke-width="1.1"/><line x1="502" y1="51.5" x2="516" y2="51.5" stroke="#383838" stroke-width="1.1"/><line x1="502" y1="55.5" x2="516" y2="55.5" stroke="#383838" stroke-width="1.1"/><line x1="502" y1="59.5" x2="516" y2="59.5" stroke="#383838" stroke-width="1.1"/><line x1="502" y1="63.5" x2="516" y2="63.5" stroke="#383838" stroke-width="1.1"/><line x1="526" y1="59.5" x2="542" y2="59.5" stroke="#383838" stroke-width="1.1"/><line x1="526" y1="63.5" x2="542" y2="63.5" stroke="#383838" stroke-width="1.1"/><path d="M526.5 51 V57 M541.5 51 V57" stroke="#383838" stroke-width="1.1" fill="none" /><path d="M528.5 54 H532.5 M530.5 52 L528.5 54 L530.5 56 M535.5 54 H539.5 M537.5 52 L539.5 54 L537.5 56" stroke="#6fa98a" stroke-width="1" fill="none" /><rect x="586" y="29.7" width="16" height="11" rx="0" stroke="none" stroke-width="1.1" fill="#d8ebdf"/><rect x="583.5" y="25.5" width="21" height="20" rx="1.5" stroke="#383838" stroke-width="1.3" fill="none"/><path d="M583.5 29.7 H604.5 M583.5 40.8 H604.5 M590.8 25.5 V29.7 M597.7 25.5 V29.7 M590.8 40.8 V45.5 M597.7 40.8 V45.5" stroke="#383838" stroke-width="1.1" fill="none" /><path d="M587.5 35.2 H600.5 M589.5 33.2 L587.5 35.2 L589.5 37.2 M598.5 33.2 L600.5 35.2 L598.5 37.2" stroke="#6fa98a" stroke-width="1" fill="none" /><path d="M617.0 57.8 L622.0 57.8 L619.5 60.5 Z" fill="#777"/><path d="M651.5 25.5 H647.5 V29.5 M666 25.5 H670 V29.5 M647.5 40.5 V44.5 H651.5" stroke="#383838" stroke-width="1.3" fill="none" /><line x1="652.5" y1="30.5" x2="664.5" y2="30.5" stroke="#555" stroke-width="1.1"/><line x1="652.5" y1="34.5" x2="664.5" y2="34.5" stroke="#555" stroke-width="1.1"/><line x1="652.5" y1="38.2" x2="664.5" y2="38.2" stroke="#555" stroke-width="1.1"/><path d="M670.5 38 V43.5 Q670.5 44.5 669.5 44.5 H659.5 M662 42 L659.5 44.5 L662 47" stroke="#6fa98a" stroke-width="1.3" fill="none" /><circle cx="712.5" cy="57.5" r="7" stroke="#383838" stroke-width="1.2" fill="none"/><path d="M709.5 53 L712.5 57 L715.5 53 M712.5 57 V62 M709.8 57.5 H715.2 M709.8 59.8 H715.2" stroke="#3a8a5a" stroke-width="1" fill="none" /><path d="M725.0 57.3 L730.0 57.3 L727.5 60.0 Z" fill="#777"/><text x="764.5" y="56.6" font-size="8.6" fill="#333" letter-spacing="0.6" font-family="Liberation Sans">000</text><path d="M771.8 59.5 V63.3 L770.3 65" stroke="#383838" stroke-width="1.3" fill="none" /><text x="797" y="57.2" font-size="9.5" fill="#333" letter-spacing="1" font-family="Liberation Sans">.0</text><text x="793" y="65.4" font-size="9.5" fill="#333" letter-spacing="1" font-family="Liberation Sans">.00</text><path d="M794 53.5 H798.5 M795.8 51.7 L794 53.5 L795.8 55.3" stroke="#6fa98a" stroke-width="1" fill="none" /><text x="817" y="57.2" font-size="9.5" fill="#333" letter-spacing="1" font-family="Liberation Sans">.00</text><text x="822" y="65.4" font-size="9.5" fill="#333" letter-spacing="1" font-family="Liberation Sans">.0</text><path d="M818 61.5 H822 M820.2 59.7 L822 61.5 L820.2 63.3" stroke="#6fa98a" stroke-width="1" fill="none" /><path d="M829.5 30.8 L834.5 30.8 L832 33.5 Z" fill="#777"/><rect x="878" y="25.5" width="6.3" height="5.6" rx="0" stroke="none" stroke-width="1.1" fill="#d8ebdf"/><rect x="878" y="31.1" width="4.6" height="6.5" rx="0" stroke="none" stroke-width="1.1" fill="#d8ebdf"/><rect x="878" y="37.6" width="10.2" height="6" rx="0" stroke="none" stroke-width="1.1" fill="#d8ebdf"/><rect x="872.5" y="25.5" width="21" height="18" rx="1.8" stroke="#383838" stroke-width="1.2" fill="none"/><path d="M872.5 31.1 H893.5 M872.5 37.6 H893.5 M878 25.5 V43.5 M884.3 25.5 V31.1 M882.6 31.1 V37.6 M888.2 37.6 V43.5" stroke="#383838" stroke-width="0.9" fill="none" /><path d="M906.3 57.8 L911.3 57.8 L908.8 60.5 Z" fill="#777"/><rect x="939.5" y="25.5" width="13.2" height="12.1" rx="0" stroke="none" stroke-width="1.1" fill="#d8ebdf"/><path d="M946 43.5 H941 Q939.5 43.5 939.5 42 V27 Q939.5 25.5 941 25.5 H958.3 Q959.8 25.5 959.8 27 V31.1 H952.7" stroke="#383838" stroke-width="1.2" fill="none" /><path d="M939.5 31.1 H952.7 M939.5 37.6 H952.7 M946 25.5 V43.5 M952.7 25.5 V37.6" stroke="#383838" stroke-width="0.9" fill="none" /><path d="M949.5 44.5 L961 33.5 Q962.8 33.5 962.8 35.3 L951.5 46 Q949 46.5 949.5 44.5 Z" stroke="#6fa98a" stroke-width="1" fill="#d8ebdf" /><path d="M950.5 41.8 L952.8 44.5" stroke="#6fa98a" stroke-width="0.8" fill="none" /><path d="M974.0 57.8 L979.0 57.8 L976.5 60.5 Z" fill="#777"/><path d="M1029 45.5 H1019.5 Q1017.5 45.5 1017.5 43.5 V26.5 Q1017.5 24.5 1019.5 24.5 H1031.5 L1034.8 27.8 V32.5" stroke="#222" stroke-width="1.3" fill="none" /><path d="M1031 24.3 L1035 28.3 L1031 28.3 Z" fill="#222"/><path d="M1029.6 32.8 Q1027.8 35 1028.4 37.2 Q1029 39.2 1030.9 39.9 V45.6 Q1030.9 46.4 1031.7 46.4 H1033.3 Q1034.1 46.4 1034.1 45.6 V39.9 Q1036 39.2 1036.6 37.2 Q1037.2 35 1035.4 32.8 L1033.4 35.8 H1031.6 Z" stroke="#7aae8f" stroke-width="1.1" fill="#cfe3d5" /><path d="M1094.5 27.5 V25.5 H1078.5 L1087 35 L1078.5 44.5 H1094.5 V42.5" stroke="#383838" stroke-width="1.3" fill="none" /><path d="M1098.5 57.3 L1103.5 57.3 L1101 60.0 Z" fill="#777"/><path d="M1121.5 25.5 H1141.5 L1134 36.5 V45 H1129 V36.5 Z" stroke="#383838" stroke-width="1.3" fill="none" /><path d="M1143.5 57.3 L1148.5 57.3 L1146 60.0 Z" fill="#777"/><path d="M1165.5 34.5 L1170.3 23.5 L1175.1 34.5 M1167.2 30.8 H1173.4" stroke="#383838" stroke-width="1.2" fill="none" /><path d="M1166 37.3 H1175 L1165.8 45 H1175.5" stroke="#383838" stroke-width="1.2" fill="none" /><path d="M1182.5 24 V45 M1178.5 40.5 L1182.5 45 L1186.5 40.5" stroke="#6fa98a" stroke-width="1.2" fill="none" /><path d="M1187.0 57.3 L1192.0 57.3 L1189.5 60.0 Z" fill="#777"/><path d="M1224 25.5 H1210 Q1209 25.5 1209 27 V44.5 H1224 M1209 31 H1224 M1214 25.5 V44.5" stroke="#383838" stroke-width="1.2" fill="none" /><rect x="1215" y="32" width="9" height="5" rx="0" stroke="none" stroke-width="1.1" fill="#d8ebdf"/></svg>
<div style="left:0px;top:933px;width:37px;height:7px;background:#e8e8e8;border-right:1px solid #c4c4c4"></div>
<div style="left:0px;top:940px;width:1224px;height:21px;background:#e6e6e6;border-top:1px solid #d2d2d2"></div>
<div style="left:0px;top:961px;width:1224px;height:7px;background:#fbfbfb"></div>
<div style="left:41px;top:961px;width:1px;height:7px;background:#dadada"></div>
<div style="left:145px;top:961px;width:1px;height:7px;background:#dadada"></div>
<div style="left:114px;top:941px;width:57px;height:20px;background:#d2d2d2;border-right:1px solid #bdbdbd"></div>
<div class="t" style="left:115px;top:946px;width:57px;text-align:center;font-size:12.5px;color:#505050">主页</div>
<div style="left:171px;top:940px;width:55px;height:21px;background:#fff"></div>
<div class="t" style="left:172px;top:946px;width:55px;text-align:center;font-size:12.5px;color:#3a9a3a">凭证</div>
<div style="left:226px;top:941px;width:56px;height:20px;background:#d2d2d2;border-right:1px solid #bdbdbd"></div>
<div class="t" style="left:227px;top:946px;width:56px;text-align:center;font-size:12.5px;color:#505050">利润</div>
<div style="left:282px;top:941px;width:56px;height:20px;background:#d2d2d2;border-right:1px solid #bdbdbd"></div>
<div class="t" style="left:283px;top:946px;width:56px;text-align:center;font-size:12.5px;color:#505050">负债</div>
<div style="left:338px;top:941px;width:57px;height:20px;background:#d2d2d2;border-right:1px solid #bdbdbd"></div>
<div class="t" style="left:339px;top:946px;width:57px;text-align:center;font-size:12.5px;color:#505050">总账</div>
<div style="left:395px;top:941px;width:67px;height:20px;background:#d2d2d2;border-right:1px solid #bdbdbd"></div>
<div class="t" style="left:396px;top:946px;width:67px;text-align:center;font-size:12.5px;color:#505050">明细账</div>
<div style="left:462px;top:941px;width:56px;height:20px;background:#d2d2d2;border-right:1px solid #bdbdbd"></div>
<div class="t" style="left:463px;top:946px;width:56px;text-align:center;font-size:12.5px;color:#505050">封面</div>
<div style="left:518px;top:941px;width:57px;height:20px;background:#d2d2d2;border-right:1px solid #bdbdbd"></div>
<div class="t" style="left:519px;top:946px;width:57px;text-align:center;font-size:12.5px;color:#505050">数据</div>
<div style="left:575px;top:941px;width:79px;height:20px;background:#d2d2d2;border-right:1px solid #bdbdbd"></div>
<div class="t" style="left:576px;top:946px;width:79px;text-align:center;font-size:12.5px;color:#505050">科目设置</div>
<div style="left:654px;top:941px;width:80px;height:20px;background:#d2d2d2;border-right:1px solid #bdbdbd"></div>
<div class="t" style="left:655px;top:946px;width:80px;text-align:center;font-size:12.5px;color:#505050">年度余额</div>
<div style="left:734px;top:941px;width:68px;height:20px;background:#d2d2d2;border-right:1px solid #bdbdbd"></div>
<div class="t" style="left:735px;top:946px;width:68px;text-align:center;font-size:12.5px;color:#505050">余额表</div>
<svg style="position:absolute;left:0;top:0;width:1224px;height:968px" viewBox="0 0 1224 968"><path d="M21 945 L16 950.5 L21 956 M13 945 V956" stroke="#c4c4c4" stroke-width="1.2" fill="none"/><path d="M45 945 L40 950.5 L45 956" stroke="#c4c4c4" stroke-width="1.2" fill="none"/><path d="M64 945 L69 950.5 L64 956" stroke="#c4c4c4" stroke-width="1.2" fill="none"/><path d="M88 945 L93 950.5 L88 956 M96 945 V956" stroke="#c4c4c4" stroke-width="1.2" fill="none"/><line x1="10.5" y1="944" x2="10.5" y2="957" stroke="#d6d6d6"/><line x1="97.5" y1="944" x2="97.5" y2="957" stroke="#d6d6d6"/><path d="M809 950.5 H821 M815 944.5 V956.5" stroke="#444" stroke-width="1.2"/><path d="M963.5 944 V957 M966 944 V957" stroke="#bbb" stroke-width="1"/></svg>
<div style="left:972px;top:943px;width:20px;height:15px;background:#d0d0d0"></div>
<svg style="position:absolute;left:978px;top:947px" width="8" height="8"><path d="M6 0.5 L2 4 L6 7.5 Z" fill="#777"/></svg>
<div style="left:992px;top:944px;width:260px;height:14px;background:#fff;border:1px solid #b8b8b8;border-radius:7px"></div></body></html>
